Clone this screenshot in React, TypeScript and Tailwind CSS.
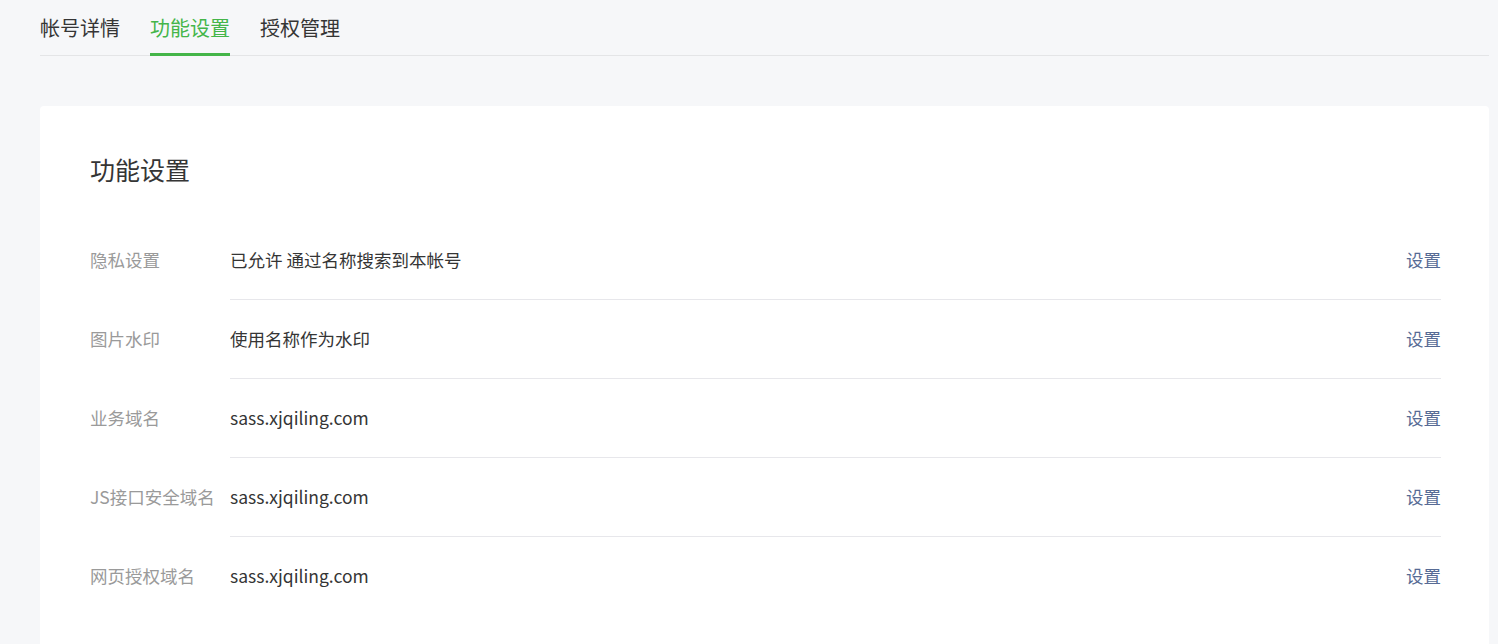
const rows = [
  { label: "隐私设置", value: "已允许 通过名称搜索到本帐号" },
  { label: "图片水印", value: "使用名称作为水印" },
  { label: "业务域名", value: "sass.xjqiling.com" },
  { label: "JS接口安全域名", value: "sass.xjqiling.com" },
  { label: "网页授权域名", value: "sass.xjqiling.com" },
];

const tabs = ["帐号详情", "功能设置", "授权管理"];

export default function App() {
  return (
    <div
      className="min-h-[644px] bg-[#f6f7f9] pl-[40px] pr-[9px]"
      style={{ fontFamily: '"Noto Sans CJK SC", "Noto Sans", sans-serif' }}
    >
      <div className="flex gap-[30px] border-b border-[#e4e5e7] h-[56px]">
        {tabs.map((t, i) => (
          <div
            key={t}
            className={
              i === 1
                ? "relative pt-[13px] text-[20px] leading-[30px] text-[#44b549]"
                : "pt-[13px] text-[20px] leading-[30px] text-[#353535]"
            }
          >
            {t}
            {i === 1 && (
              <div className="absolute left-0 right-0 top-[53px] h-[3px] bg-[#44b549]" />
            )}
          </div>
        ))}
      </div>

      <div className="mt-[50px] bg-white rounded-[4px] pt-[46px] pl-[50px] pr-[48px] pb-[40px]">
        <h2 className="text-[25px] leading-[35px] text-[#353535] font-normal">功能设置</h2>
        <div className="mt-[34px]">
          {rows.map((r, i) => (
            <div key={r.label} className="flex text-[17.5px]">
              <div className="w-[140px] flex items-center text-[#9a9a9a] whitespace-nowrap">{r.label}</div>
              <div
                className={
                  i < rows.length - 1
                    ? "flex-1 h-[79px] flex items-center justify-between border-b border-[#e7e7eb]"
                    : "flex-1 h-[79px] flex items-center justify-between"
                }
              >
                <span className="text-[#353535]">{r.value}</span>
                <a className="text-[#576b95] cursor-pointer">设置</a>
              </div>
            </div>
          ))}
        </div>
      </div>
    </div>
  );
}
